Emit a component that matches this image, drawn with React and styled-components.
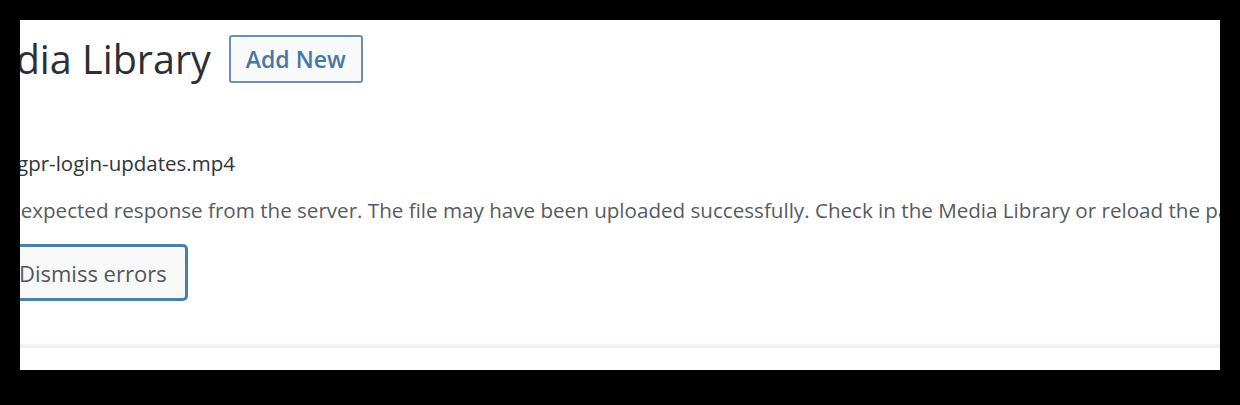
import React from 'react';
import styled, { createGlobalStyle } from 'styled-components';

const Global = createGlobalStyle`
    html, body {
        margin: 0;
        padding: 0;
        background: #000;
    }
    body {
        font-family: "Open Sans", "Noto Sans", "Liberation Sans", sans-serif;
    }
`

const Frame = styled.div`
    width: 1240px;
    height: 405px;
    padding: 20px;
    box-sizing: border-box;
    background: #000;
`

const Screen = styled.div`
    width: 1200px;
    height: 350px;
    background: #fff;
    overflow: hidden;
    display: flex;
    flex-direction: column;
`

const Header = styled.div`
    display: flex;
    align-items: center;
    gap: 18px;
    margin-left: -62px;
    padding-top: 15px;
    height: 48px;
`

const Title = styled.h1`
    margin: 0;
    font-size: 39.5px;
    font-weight: 400;
    color: #2a3036;
    white-space: nowrap;
`

const OutlineButton = styled.button`
    font-family: inherit;
    background: ${p => p.$thick ? '#f8f8f8' : '#f7f9fb'};
    color: ${p => p.$tone || '#4a77a3'};
    border: ${p => p.$thick ? 3 : 2}px solid ${p => p.$thick ? '#4a80b0' : '#6b92b6'};
    border-radius: ${p => p.$thick ? 5 : 3}px;
    font-size: ${p => p.$size || 22}px;
    font-weight: ${p => p.$weight || 400};
    height: ${p => p.$h}px;
    padding: 0 ${p => p.$pad}px;
    white-space: nowrap;
    cursor: pointer;
`

const ErrorBlock = styled.div`
    padding-top: 70px;
    display: flex;
    flex-direction: column;
`

const Line = styled.div`
    white-space: nowrap;
    font-size: ${p => p.$size}px;
    color: ${p => p.$color};
    margin-left: ${p => p.$shift}px;
    line-height: 1;
    margin-bottom: ${p => p.$gap || 0}px;
`

const DismissRow = styled.div`
    margin-left: -22px;
    padding-top: 24px;
`

const Divider = styled.div`
    margin-top: auto;
    margin-bottom: 22px;
    height: 4px;
    background: #f1f1f1;
    box-shadow: 0 0 2px #f4f4f4;
`

export default function App() {
    return (
        <>
            <Global />
            <Frame>
                <Screen>
                    <Header>
                        <Title>Media Library</Title>
                        <OutlineButton $h={48} $pad={15} $size={23} $weight={600}>Add New</OutlineButton>
                    </Header>
                    <ErrorBlock>
                        <Line $size={20.5} $color="#2f353a" $shift={-3} $gap={26}>gpr-login-updates.mp4</Line>
                        <Line $size={20.6} $color="#555b61" $shift={-27}>
                            Unexpected response from the server. The file may have been uploaded successfully. Check in the Media Library or reload the page.
                        </Line>
                    </ErrorBlock>
                    <DismissRow>
                        <OutlineButton $thick $h={57} $pad={18} $size={22} $tone="#50575e">Dismiss errors</OutlineButton>
                    </DismissRow>
                    <Divider />
                </Screen>
            </Frame>
        </>
    )
}
